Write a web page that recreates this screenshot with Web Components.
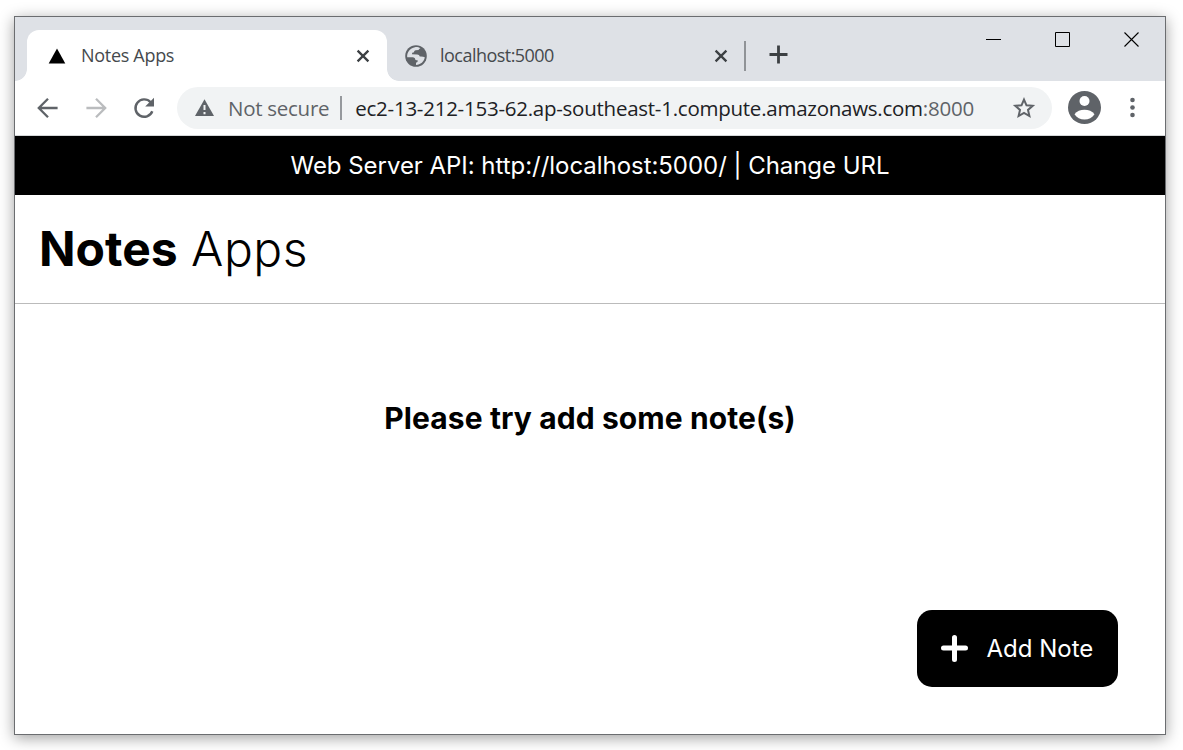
<!DOCTYPE html>
<html lang="en">
<head>
<meta charset="utf-8">
<title>Notes Apps</title>
<style>
html,body{margin:0;height:100%;background:#fff;overflow:hidden}
body{box-sizing:border-box;width:1183px;height:750px;padding:16px 17px 15px 14px;font-family:"Open Sans","Noto Sans",sans-serif}
</style>
</head>
<body>
<browser-window></browser-window>
<script>
function define(name, html) {
  const t = document.createElement('template');
  t.innerHTML = html;
  customElements.define(name, class extends HTMLElement {
    constructor() {
      super();
      this.attachShadow({mode: 'open'}).appendChild(t.content.cloneNode(true));
    }
  });
}

define('browser-tab', `
<style>
:host{display:flex;box-sizing:border-box;height:51px;align-items:center;position:relative;color:#45494d;font-size:18px;line-height:24px;letter-spacing:-.3px}
:host([active]){background:#fff;border-radius:12px 12px 0 0;width:360px;padding:0 16px 0 20px}
:host(:not([active])){width:358px;padding:0 16px 0 17px;letter-spacing:-.53px}
:host([active])::before,:host([active])::after{content:"";position:absolute;bottom:0;width:12px;height:12px}
:host([active])::before{left:-12px;background:radial-gradient(circle at 0 0,#dee1e6 11.5px,#fff 12.2px)}
:host([active])::after{right:-12px;background:radial-gradient(circle at 100% 0,#dee1e6 11.5px,#fff 12.2px)}
.t{flex:1;white-space:nowrap;padding:0 0 2px 14px}
svg{display:block}
</style>
<slot name="icon"></slot><span class="t"><slot></slot></span>
<svg width="16" height="16" viewBox="0 0 16 16"><path d="M2.6 2.6l10.8 10.8M13.4 2.6L2.6 13.4" stroke="#3c4043" stroke-width="2.3" fill="none"/></svg>`);

define('window-controls', `
<style>:host{display:flex;align-items:flex-start;gap:54px;padding:15px 26px 0 0}svg{display:block}</style>
<svg width="15" height="16"><path d="M0 7.5h15" stroke="#000"/></svg>
<svg width="15" height="16"><path d="M.5.5h14v14H.5z" stroke="#000" fill="none"/></svg>
<svg width="15" height="16"><path d="M.5.5l14 14M14.5.5l-14 14" stroke="#000" stroke-width="1.1"/></svg>`);

define('tab-strip', `
<style>
:host{display:flex;height:64px;background:#dee1e6;padding-left:12px;align-items:flex-end}
.sep{width:2px;height:30px;background:#909397;margin:0 0 10px -1px}
.plus{display:block;margin:0 0 17px 23px}
window-controls{margin-left:auto;align-self:flex-start}
</style>
<browser-tab active><svg slot="icon" width="20" height="18" viewBox="0 0 20 18" style="display:block"><path d="M10 1.5L18.3 16.6H1.7z"/></svg><span>Notes Apps</span></browser-tab>
<browser-tab><svg slot="icon" width="24" height="24" viewBox="0 0 24 24" style="display:block"><circle cx="12" cy="12" r="10.8" fill="#5f6368"/><path d="M11 3.2C12.5 2.9 15 3.3 16.5 4.3C15.5 4.6 14.9 5.1 14.7 6L11.5 6.2Q9.8 6.5 10 8.3Q7.6 8.3 7.9 10.3L13.2 10.4Q15.4 10.5 15.8 12.5Q19.2 12.3 20.8 13.3C20.2 17.5 16.5 20.9 12 20.9V18.8Q13.8 18.4 13.9 16.4L11.5 16Q11.2 13.5 9 13.2H3.2C2.7 8.5 6 3.8 11 3.2z" fill="#dee1e6"/></svg><span style="margin-left:-2px">localhost:5000</span></browser-tab>
<span class="sep"></span>
<svg class="plus" width="19" height="19"><path d="M9.5.5v18M.5 9.5h18" stroke="#3c4043" stroke-width="2.8"/></svg>
<window-controls></window-controls>`);

define('address-bar', `
<style>
:host{display:flex;box-sizing:border-box;width:875px;height:42px;border-radius:21px;background:#f1f3f4;align-items:center;padding:0 16px 0 17px;font-size:20.5px;line-height:28px;color:#5f6368;white-space:nowrap;letter-spacing:-.25px}
svg{display:block}.w{margin-right:13px}.bar{width:2px;height:24px;background:#96999d;margin:0 13px 0 11px}
b{font-weight:400;color:#202124}.s{margin-left:auto}
</style>
<svg class="w" width="21" height="20" viewBox="0 0 21 20"><path d="M10.5 1.3L20 18H1z" fill="#5f6368"/><path d="M10.5 7v5M10.5 14v2.2" stroke="#f1f3f4" stroke-width="2"/></svg>
<span style="letter-spacing:-.27px">Not secure</span><span class="bar"></span><span><b>ec2-13-212-153-62.ap-southeast-1.compute.amazonaws.com</b>:8000</span>
<svg class="s" width="24" height="24" viewBox="0 0 24 24"><path d="M12 3.6L14.5 9.3L20.7 9.8L16 13.9L17.4 20L12 16.8L6.6 20L8 13.9L3.3 9.8L9.5 9.3z" fill="none" stroke="#5f6368" stroke-width="2"/></svg>`);

define('tool-bar', `
<style>
:host{display:flex;box-sizing:border-box;height:55px;background:#fff;border-bottom:1px solid #d5d8d9;align-items:center;padding-left:21px}
svg{display:block}
.user{margin:0 0 1px 16px}
</style>
<svg width="24" height="24" viewBox="0 0 24 24"><path d="M21.6 12H3.2M12 2.8L2.8 12L12 21.2" fill="none" stroke="#5f6368" stroke-width="2.3"/></svg>
<svg style="margin-left:24px" width="24" height="24" viewBox="0 0 24 24"><path d="M2.4 12H20.8M12 2.8L21.2 12L12 21.2" fill="none" stroke="#babcbe" stroke-width="2.3"/></svg>
<svg style="margin:0 21px 0 24px" width="24" height="24" viewBox="0 0 24 24"><path d="M20.3 15.2A8.7 8.7 0 1 1 18.6 6.2" fill="none" stroke="#5f6368" stroke-width="2.4"/><path d="M22 1.8V10.6H13.2z" fill="#5f6368"/></svg>
<address-bar></address-bar>
<svg class="user" width="33" height="33" viewBox="0 0 33 33"><circle cx="16.5" cy="16.5" r="16.5" fill="#5f6368"/><circle cx="16.5" cy="10" r="5" fill="#fff"/><path d="M6.5 23.2C8.6 20.2 12.6 18.8 16.5 18.8S24.4 20.2 26.5 23.2C24.4 26.5 20.6 28.6 16.5 28.6S8.6 26.5 6.5 23.2z" fill="#fff"/></svg>
<svg style="margin-left:28px" width="7" height="22" viewBox="0 0 7 22"><g fill="#5f6368"><circle cx="3.5" cy="3" r="2.3"/><circle cx="3.5" cy="10.5" r="2.3"/><circle cx="3.5" cy="18" r="2.3"/></g></svg>`);

define('api-banner', `
<style>:host{display:flex;height:59px;background:#000;color:#fff;justify-content:center;align-items:center;font:24px/29px Inter,sans-serif;letter-spacing:-.04px;white-space:nowrap}</style>
<span><slot></slot></span>`);

define('page-header', `
<style>:host{display:flex;box-sizing:border-box;height:109px;border-bottom:1px solid #bbb;align-items:center;padding-left:24px;font:300 48px/58px Inter,sans-serif;color:#000}</style>
<span><slot></slot></span>`);

define('add-button', `
<style>
:host{display:flex;box-sizing:border-box;width:201px;height:77px;border-radius:15px;background:#000;color:#fff;align-items:center;padding-left:23px;font:24px/29px Inter,sans-serif;white-space:nowrap}
svg{display:block;margin-right:17.5px}
</style>
<svg width="29" height="29" viewBox="0 0 29 29"><path d="M14.5 3.5v22M3.5 14h22" stroke="#fff" stroke-width="5" stroke-linecap="round"/></svg>
<span><slot></slot></span>`);

define('notes-page', `
<style>
:host{display:flex;flex:1;flex-direction:column;background:#fff}
main{flex:1;display:flex;flex-direction:column;align-items:center;padding:96px 47px 47px;color:#000}
h2{margin:0;font:700 30px/36px Inter,sans-serif;letter-spacing:.1px;white-space:nowrap}
add-button{margin-top:auto;align-self:flex-end}
</style>
<api-banner>Web Server API: http://localhost:5000/ | Change URL</api-banner>
<page-header><b style="font-weight:700">Notes</b> <span style="letter-spacing:.5px">Apps</span></page-header>
<main><h2>Please try add some note(s)</h2><add-button>Add Note</add-button></main>`);

define('browser-window', `
<style>:host{display:flex;flex-direction:column;box-sizing:border-box;width:1152px;height:719px;border:1px solid #6b6d70;background:#fff;box-shadow:0 3px 14px rgba(0,0,0,.38)}</style>
<tab-strip></tab-strip><tool-bar></tool-bar><notes-page></notes-page>`);
</script>
</body>
</html>
